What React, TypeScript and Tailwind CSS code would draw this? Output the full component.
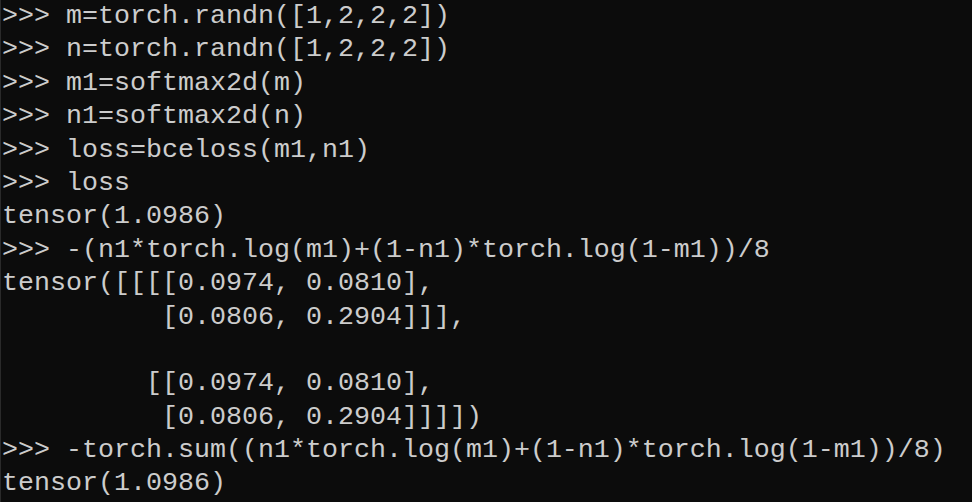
const lines = [
  ">>> m=torch.randn([1,2,2,2])",
  ">>> n=torch.randn([1,2,2,2])",
  ">>> m1=softmax2d(m)",
  ">>> n1=softmax2d(n)",
  ">>> loss=bceloss(m1,n1)",
  ">>> loss",
  "tensor(1.0986)",
  ">>> -(n1*torch.log(m1)+(1-n1)*torch.log(1-m1))/8",
  "tensor([[[[0.0974, 0.0810],",
  "          [0.0806, 0.2904]]],",
  "",
  "         [[0.0974, 0.0810],",
  "          [0.0806, 0.2904]]]])",
  ">>> -torch.sum((n1*torch.log(m1)+(1-n1)*torch.log(1-m1))/8)",
  "tensor(1.0986)",
];

export default function App() {
  return (
    <div className="w-[972px] h-[502px] overflow-hidden bg-[#0c0c0c] border-l border-[#2a2a2a]">
      <div className="pl-[1px] font-['Liberation_Mono',monospace] text-[26.67px] leading-[33.4px] text-[#cccccc]">
        {lines.map((line, i) => (
          <div key={i} className="whitespace-pre h-[33.4px]">
            {line}
          </div>
        ))}
      </div>
    </div>
  );
}
